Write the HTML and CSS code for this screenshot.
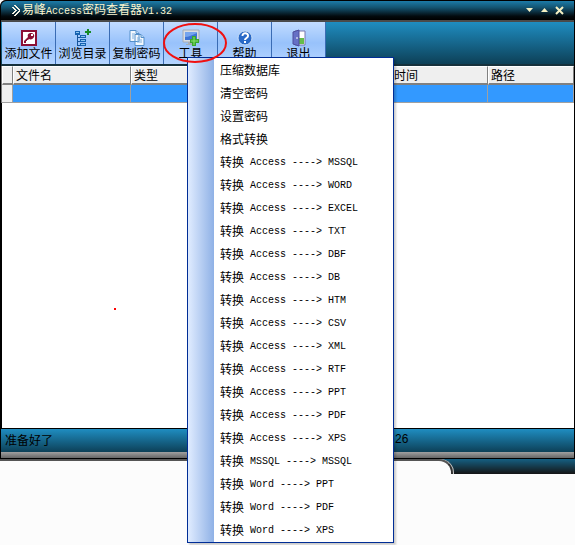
FILE: index.html
```html
<!DOCTYPE html>
<html lang="zh-CN">
<head>
    <meta charset="UTF-8">
    <title>易峰Access密码查看器V1.32</title>
    <link rel="stylesheet" href="styles.css">
</head>
<body>
    <div class="window">
        <div class="titlebar">
            <svg class="logo" width="9" height="11" viewBox="0 0 9 11" shape-rendering="crispEdges"><path d="M0 2h2v1H0zM1 3h2v1H1zM2 4h2v1H2zM3 5h2v1H3zM2 6h2v1H2zM1 7h2v1H1zM0 8h2v1H0zM2 0h2v1H2zM3 1h2v1H3zM4 2h2v1H4zM5 3h2v1H5zM6 4h2v1H6zM7 5h1v1H7zM6 6h2v1H6zM5 7h2v1H5zM4 8h2v1H4zM3 9h2v1H3zM2 10h2v1H2z" fill="#f4f2e4"/></svg>
            <h1 class="title">易峰<span class="en">Access</span>密码查看器<span class="en">V1.32</span></h1>
            <button class="win-btn" aria-label="最小化"><svg width="9" height="9" viewBox="0 0 9 9"><path d="M1 2h7L4.500 6z" fill="#f6f1c4"/></svg></button>
            <button class="win-btn" aria-label="最大化"><svg width="9" height="9" viewBox="0 0 9 9"><path d="M1 6h7L4.500 2z" fill="#f6f1c4"/></svg></button>
            <button class="win-btn" aria-label="关闭"><svg width="9" height="9" viewBox="0 0 9 9"><path d="M1 1l7 7M8 1L1 8" stroke="#f6f1c4" stroke-width="2"/></svg></button>
        </div>
        <div class="toolbar">
            <button class="tool">
                <svg width="18" height="18" viewBox="0 0 18 18"><path d="M1 1h16v16H1z" fill="#8b0f35"/><path d="M3 3h12v12H3z" fill="#fff"/><path d="M4 14v-2l4-4c-1-3 1-4 3-4s4 2 3 4-3 3-5 2l-1 1H7v1H6v2z" fill="#8b0f35"/><path d="M11 5h2v2h-2z" fill="#fff"/></svg>
                添加文件
            </button>
            <button class="tool">
                <svg width="18" height="18" viewBox="0 0 18 18" shape-rendering="crispEdges"><path d="M3 5v11h4M3 8h4M3 12h4" fill="none" stroke="#16549b"/><path d="M1 2h5v4H1zM6 6h6v3H6zM6 10h6v3H6zM6 14h6v3H6z" fill="#1762b0"/><path d="M2 3h3v1H2zM7 7h4v1H7zM7 11h4v1H7zM7 15h4v1H7z" fill="#8dc4ee"/><path d="M14 0v6M11 3h6" stroke="#168a25" stroke-width="2"/></svg>
                浏览目录
            </button>
            <button class="tool">
                <svg width="18" height="18" viewBox="0 0 18 18"><path d="M2 1.500h6l3 3v8H2zM7 5.500h6l3 3v8H7z" fill="#f3f8fd" stroke="#5590ca"/><path d="M8 1.500v3h3M13 5.500v3h3" fill="#bbdaf5" stroke="#5590ca"/><path d="M4 5h3M4 7h2M4 9h2M9 9h3M9 11h5M9 13h5" stroke="#7fb0dd"/></svg>
                复制密码
            </button>
            <button class="tool">
                <svg width="18" height="18" viewBox="0 0 18 18"><path d="M1 1h16v12H1z" fill="#d9dde2" stroke="#a3abb6"/><path d="M3 3h12v8H3z" fill="#3d73d4"/><path d="M3 8c4 0 7-2 12-4V3H3z" fill="#75a4ee"/><path d="M6 13h6v2h2v1H4v-1h2z" fill="#a6aeb6"/><path d="M10 7h4v3h3v4h-3v3h-4v-3H8v-4h2z" fill="#39a72f"/><path d="M12 8v8M9 12h7" stroke="#8ce570"/></svg>
                工具
            </button>
            <button class="tool">
                <svg width="18" height="18" viewBox="0 0 18 18"><circle cx="9" cy="9" r="7" fill="#2969c7" stroke="#c9def6"/><path d="M6.500 7c0-4 6-3.500 5.500 0 0 2-3 2-3 4M9 12v2" fill="none" stroke="#fff" stroke-width="2"/></svg>
                帮助
            </button>
            <button class="tool">
                <svg width="18" height="18" viewBox="0 0 18 18"><path d="M5 2h10v14H5z" fill="#fff" stroke="#7777af"/><path d="M9 9h5v6H9z" fill="#65bd4b"/><path d="M3 3l6-2v16l-6-2z" fill="#6670c5" stroke="#4c4c9b"/><path d="M7 8v2" stroke="#fff"/></svg>
                退出
            </button>
        </div>
        <table class="grid">
            <thead>
                <tr>
                    <th class="col-mark"></th>
                    <th class="col-name">文件名</th>
                    <th class="col-type">类型</th>
                    <th class="col-time">时间</th>
                    <th>路径</th>
                </tr>
            </thead>
            <tbody>
                <tr>
                    <td class="mark"></td>
                    <td></td>
                    <td></td>
                    <td></td>
                    <td></td>
                </tr>
            </tbody>
        </table>
        <div class="client"></div>
        <div class="statusbar">
            <span class="status">准备好了</span>
            <span class="count">26</span>
        </div>
        <div class="frame"></div>
        <svg class="mark-ring" width="66" height="42" viewBox="0 0 66 42"><ellipse cx="33" cy="21" rx="31" ry="19" fill="none" stroke="#f01010" stroke-width="2"/></svg>
        <i class="mark-dot"></i>
    </div>
    <div class="under">
        <div class="under-tab"></div>
    </div>
    <ul class="menu">
        <li><a href="#">压缩数据库</a></li>
        <li><a href="#">清空密码</a></li>
        <li><a href="#">设置密码</a></li>
        <li><a href="#">格式转换</a></li>
        <li><a href="#">转换<span class="en"> Access ----&gt; MSSQL</span></a></li>
        <li><a href="#">转换<span class="en"> Access ----&gt; WORD</span></a></li>
        <li><a href="#">转换<span class="en"> Access ----&gt; EXCEL</span></a></li>
        <li><a href="#">转换<span class="en"> Access ----&gt; TXT</span></a></li>
        <li><a href="#">转换<span class="en"> Access ----&gt; DBF</span></a></li>
        <li><a href="#">转换<span class="en"> Access ----&gt; DB</span></a></li>
        <li><a href="#">转换<span class="en"> Access ----&gt; HTM</span></a></li>
        <li><a href="#">转换<span class="en"> Access ----&gt; CSV</span></a></li>
        <li><a href="#">转换<span class="en"> Access ----&gt; XML</span></a></li>
        <li><a href="#">转换<span class="en"> Access ----&gt; RTF</span></a></li>
        <li><a href="#">转换<span class="en"> Access ----&gt; PPT</span></a></li>
        <li><a href="#">转换<span class="en"> Access ----&gt; PDF</span></a></li>
        <li><a href="#">转换<span class="en"> Access ----&gt; XPS</span></a></li>
        <li><a href="#">转换<span class="en"> MSSQL ----&gt; MSSQL</span></a></li>
        <li><a href="#">转换<span class="en"> Word ----&gt; PPT</span></a></li>
        <li><a href="#">转换<span class="en"> Word ----&gt; PDF</span></a></li>
        <li><a href="#">转换<span class="en"> Word ----&gt; XPS</span></a></li>
    </ul>
</body>
</html>
```
FILE: styles.css
```css
*{
    box-sizing: border-box;
}
body{
    margin: 0;
    background-color: #fcfcfc;
    font-family: "Noto Sans CJK SC", sans-serif;
    font-size: 12px;
    color: #000;
}
button{
    font: inherit;
    color: inherit;
    border: none;
    padding: 0;
    background: none;
}
.en{
    font-family: "Liberation Mono", monospace;
    font-size: 10px;
    white-space: pre;
}
.window{
    position: relative;
    border-left: 1px solid #000;
    border-right: 1px solid #000;
    border-top-left-radius: 6px;
    background-color: #000;
}
.titlebar{
    display: flex;
    align-items: center;
    height: 22px;
    padding: 0 7px 0 11px;
    border-top: 1px solid #000;
    border-bottom: 2px solid #4a4a4a;
    border-top-left-radius: 6px;
    background: linear-gradient(#1c7ba8, #135370 35%, #030a0e 80%, #000);
}
.title{
    flex: 1;
    margin: 0 0 0 1px;
    font-size: 12px;
    font-weight: normal;
    line-height: 18px;
    color: #fbf6cf;
}
.win-btn{
    display: flex;
    justify-content: center;
    width: 15px;
}
.toolbar{
    display: flex;
    height: 44px;
    padding-left: 1px;
    border-bottom: 2px solid #16313c;
    background: linear-gradient(#1f8dc1, #0d4057);
}
.tool{
    display: flex;
    flex-direction: column;
    align-items: center;
    width: 54px;
    padding-top: 7px;
    border-right: 1px solid #3a6cb4;
    background: linear-gradient(#c2dcff, #98c2fb 50%, #b4d4ff);
    line-height: 12px;
    white-space: nowrap;
}
.tool svg{
    flex: none;
}
.grid{
    width: 100%;
    table-layout: fixed;
    border-collapse: separate;
    border-spacing: 0;
    border-left: 1px solid #777;
}
.grid th{
    height: 19px;
    padding: 0 0 0 2px;
    border: 1px solid #fff;
    border-right-color: #808080;
    border-bottom: 2px solid #808080;
    background-color: #efefef;
    font-weight: normal;
    line-height: 16px;
    text-align: left;
}
.grid td{
    height: 18px;
    padding: 0;
    border-right: 1px solid #a0a0a0;
    border-bottom: 1px solid #a0a0a0;
    background-color: #3399ff;
}
.grid .mark{
    background-color: #efefef;
}
.grid .col-mark{
    width: 11px;
    padding: 0;
}
.col-name{
    width: 118px;
}
.col-type{
    width: 238px;
}
.grid .col-time{
    width: 119px;
    padding-left: 24px;
}
.client{
    height: 325px;
    margin-left: 1px;
    background-color: #fff;
}
.statusbar{
    display: flex;
    height: 24px;
    border-top: 1px solid #000;
    background: linear-gradient(#1f8dc1, #0d4057);
    line-height: 21px;
}
.status{
    flex: 0 0 391px;
    padding-left: 4px;
}
.count{
    padding-left: 3px;
    font-family: "Liberation Sans", sans-serif;
}
.frame{
    height: 7px;
    border-bottom: 1px solid #000;
    background: linear-gradient(#a0a0a0, #666);
}
.under{
    height: 15px;
    background: linear-gradient(#155f82, #151515);
}
.under-tab{
    width: 453px;
    height: 15px;
    border-top: 2px solid #555;
    border-right: 2px solid #333;
    border-top-right-radius: 14px;
    background-color: #fcfcfc;
    box-shadow: 1px 0 0 #ccc;
}
.mark-ring{
    position: absolute;
    z-index: 2;
    left: 161px;
    top: 22px;
}
.mark-dot{
    position: absolute;
    left: 113px;
    top: 308px;
    width: 2px;
    height: 2px;
    background-color: #f00;
}
.menu{
    position: absolute;
    left: 187px;
    top: 57px;
    width: 207px;
    margin: 0;
    padding: 0 1px 1px;
    border: 1px solid #002d96;
    background: linear-gradient(90deg, #e0ecff, #8fb1e6) no-repeat 0 0 / 26px 100% #fff;
    box-shadow: 2px 2px 2px rgba(0,0,0,0.2);
    list-style: none;
}
.menu a{
    display: flex;
    align-items: center;
    height: 23px;
    padding-left: 31px;
    color: #000;
    text-decoration: none;
    white-space: nowrap;
}
.menu .en{
    padding-top: 1px;
}
```
